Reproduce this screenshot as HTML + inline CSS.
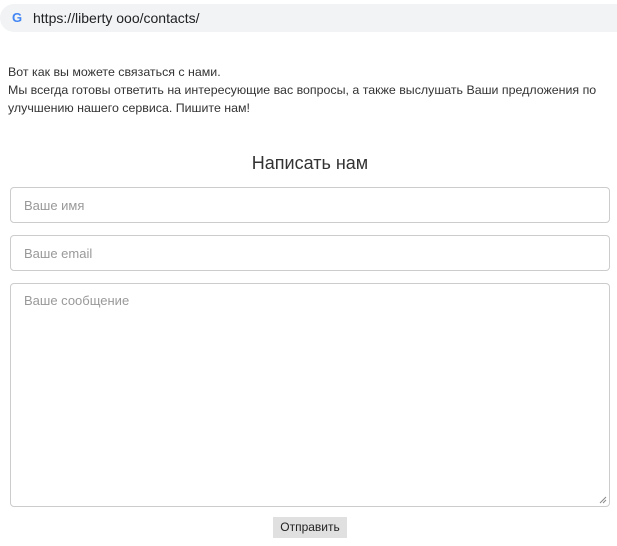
<!DOCTYPE html>
<html><head><meta charset="utf-8"><style>
body{margin:0;width:617px;height:546px;background:#fff;font-family:"Liberation Sans","DejaVu Sans",sans-serif;position:relative;overflow:hidden;color:#333}
.bar{position:absolute;left:0;top:4px;width:640px;height:28px;background:#f1f3f4;border-radius:14px}
.g{position:absolute;left:12px;top:10px;font-weight:bold;font-size:13px;color:#4285f4}
.url{position:absolute;left:33px;top:10px;font-size:14px;color:#202124}
.txt{position:absolute;left:8px;top:63px;font-size:12.4px;line-height:18px;color:#333}
h2{position:absolute;left:0;width:620px;text-align:center;top:153px;margin:0;font-weight:normal;font-size:18px;color:#333}
.f{position:absolute;left:10px;width:600px;border:1px solid #ccc;border-radius:4px;box-sizing:border-box;background:#fff}
.f span{position:absolute;left:13px;font-size:13px;color:#999}
.btn{position:absolute;left:273px;top:517px;width:74px;height:21px;background:#e0e0e0;font-size:12px;text-align:center;line-height:21px;color:#222}
</style></head><body>
<div class="bar"></div>
<div class="g"><span style="color:#4285f4">G</span></div>
<div class="url">https://liberty ooo/contacts/</div>
<div class="txt">Вот как вы можете связаться с нами.<br>Мы всегда готовы ответить на интересующие вас вопросы, а также выслушать Ваши предложения по<br>улучшению нашего сервиса. Пишите нам!</div>
<h2>Написать нам</h2>
<div class="f" style="top:187px;height:36px"><span style="top:10px">Ваше имя</span></div>
<div class="f" style="top:235px;height:36px"><span style="top:10px">Ваше email</span></div>
<div class="f" style="top:283px;height:224px"><span style="top:9px">Ваше сообщение</span>
<svg style="position:absolute;right:2px;bottom:2px" width="8" height="8"><path d="M1 7L7 1M4 7L7 4" stroke="#888" stroke-width="1"/></svg></div>
<div class="btn">Отправить</div>
</body></html>
